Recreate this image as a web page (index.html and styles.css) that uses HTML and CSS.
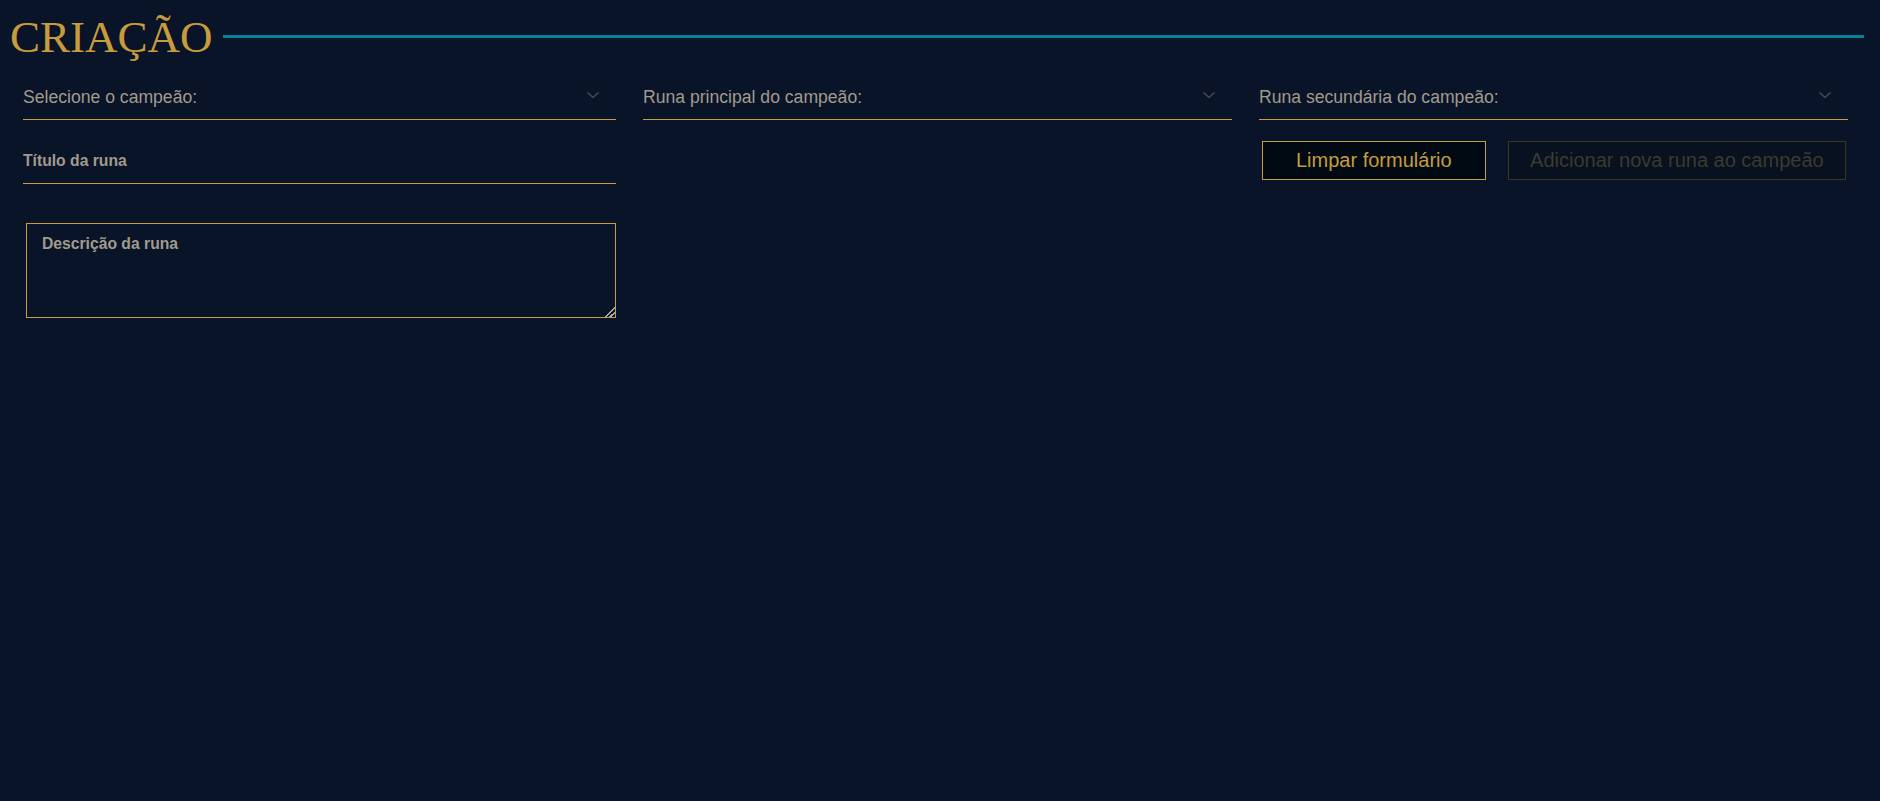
FILE: index.html
```html
<!DOCTYPE html>
<html lang="pt-BR">
<head>
<meta charset="utf-8">
<title>Criação</title>
<link rel="stylesheet" href="styles.css">
</head>
<body>
<main class="page">
  <header class="section-head">
    <h1 class="section-title">CRIAÇÃO</h1>
    <span class="section-rule"></span>
  </header>
  <form class="rune-form">
    <div class="select-field">
      <span class="select-label">Selecione o campeão:</span>
      <svg class="chevron" width="12" height="6" viewBox="0 0 12 6"><polyline points="0.5,0.5 6,5.5 11.5,0.5" fill="none" stroke="#4e5258" stroke-width="1.2"/></svg>
    </div>
    <div class="select-field">
      <span class="select-label">Runa principal do campeão:</span>
      <svg class="chevron" width="12" height="6" viewBox="0 0 12 6"><polyline points="0.5,0.5 6,5.5 11.5,0.5" fill="none" stroke="#4e5258" stroke-width="1.2"/></svg>
    </div>
    <div class="select-field">
      <span class="select-label">Runa secundária do campeão:</span>
      <svg class="chevron" width="12" height="6" viewBox="0 0 12 6"><polyline points="0.5,0.5 6,5.5 11.5,0.5" fill="none" stroke="#4e5258" stroke-width="1.2"/></svg>
    </div>
    <input class="text-field" type="text" placeholder="Título da runa">
    <div class="spacer"></div>
    <div class="actions">
      <button type="button" class="btn btn-primary">Limpar formulário</button>
      <button type="button" class="btn btn-disabled" disabled>Adicionar nova runa ao campeão</button>
    </div>
    <textarea class="desc-field" placeholder="Descrição da runa"></textarea>
  </form>
</main>
</body>
</html>
```

FILE: styles.css
```css
html, body {
  margin: 0;
  padding: 0;
  background: #0a1428;
}

body {
  min-height: 100vh;
  font-family: "Liberation Sans", Arial, sans-serif;
}

.page {
  min-height: 100vh;
}

.section-head {
  display: flex;
  align-items: center;
  gap: 10px;
  padding: 15px 16px 0 10px;
}

.section-title {
  margin: 0;
  font-family: "Liberation Serif", "Times New Roman", serif;
  font-weight: normal;
  font-size: 45px;
  line-height: 45px;
  color: #c89b3c;
}

.section-rule {
  flex: 1;
  height: 3px;
  margin-bottom: 2px;
  background: #0a7f99;
}

.rune-form {
  display: grid;
  grid-template-columns: repeat(3, 1fr);
  column-gap: 27px;
  row-gap: 21px;
  align-items: start;
  margin-top: 19px;
  padding: 0 32px 0 23px;
}

.select-field {
  display: flex;
  align-items: center;
  justify-content: space-between;
  padding: 8px 17px 12px 0;
  border-bottom: 1px solid #c89b3c;
}

.select-label {
  font-size: 17.6px;
  line-height: 20px;
  color: #a09b8c;
}

.chevron {
  display: block;
  margin-bottom: 4px;
}

.text-field {
  display: block;
  box-sizing: border-box;
  width: 100%;
  height: 43px;
  margin: 0;
  padding: 10px 0 12px 0;
  border: none;
  border-bottom: 1px solid #c89b3c;
  background: transparent;
  outline: none;
  font-family: "Liberation Sans", Arial, sans-serif;
  font-weight: 700;
  font-size: 15.7px;
  line-height: 20px;
  color: #a09b8c;
}

.text-field::placeholder {
  color: #a09b8c;
  opacity: 1;
}

.actions {
  display: flex;
  gap: 22px;
  padding-left: 3px;
}

.btn {
  box-sizing: border-box;
  height: 39px;
  margin: 0;
  font-family: "Liberation Sans", Arial, sans-serif;
  font-size: 20px;
  line-height: 37px;
  white-space: nowrap;
  cursor: pointer;
}

.btn-primary {
  padding: 0 33px;
  border: 1px solid #c89b3c;
  background: #010a13;
  color: #c89b3c;
}

.btn-disabled {
  padding: 0 21.5px;
  border: 1px solid #3b3526;
  background: #08111f;
  color: #3d3a2f;
  cursor: default;
}

.desc-field {
  grid-column: 1;
  display: block;
  box-sizing: border-box;
  width: 590px;
  height: 95px;
  margin: 18px 0 0 3px;
  padding: 10px 15px;
  border: 1px solid #c89b3c;
  border-radius: 0;
  background: transparent;
  outline: none;
  font-family: "Liberation Sans", Arial, sans-serif;
  font-weight: 700;
  font-size: 15.7px;
  line-height: 20px;
  color: #a09b8c;
}

.desc-field::-webkit-resizer {
  background:
    linear-gradient(135deg,
      transparent 0 64%,
      #a8a8b0 64% 72%,
      transparent 72% 80%,
      #a8a8b0 80% 88%,
      transparent 88%);
}

.desc-field::placeholder {
  color: #a09b8c;
  opacity: 1;
}
```
